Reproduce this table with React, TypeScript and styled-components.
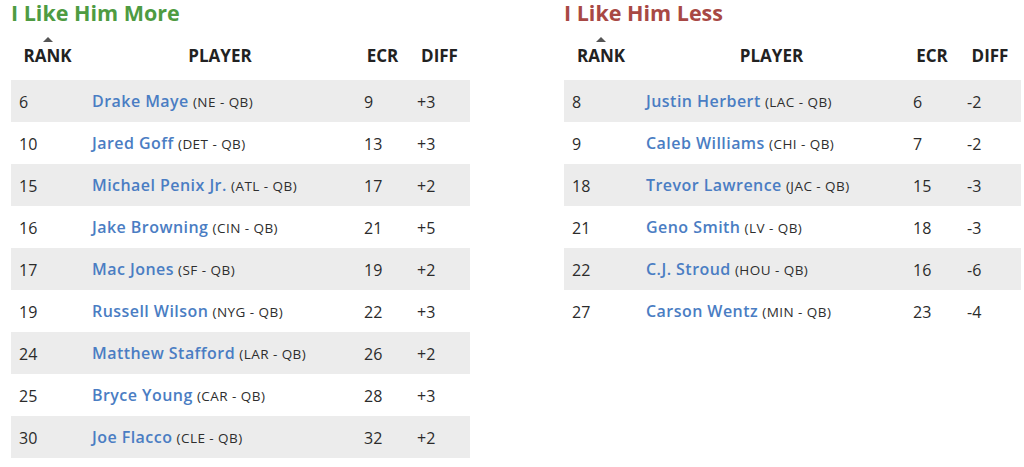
import React from "react";
import styled, { createGlobalStyle } from "styled-components";

const Global = createGlobalStyle`
  html, body { margin: 0; padding: 0; background: #ffffff; }
  body { font-family: "Open Sans", "Liberation Sans", sans-serif; color: #333333; }
`;

type Row = { rank: number; name: string; team: string; ecr: number; diff: string };

const more: Row[] = [
  { rank: 6, name: "Drake Maye", team: "NE - QB", ecr: 9, diff: "+3" },
  { rank: 10, name: "Jared Goff", team: "DET - QB", ecr: 13, diff: "+3" },
  { rank: 15, name: "Michael Penix Jr.", team: "ATL - QB", ecr: 17, diff: "+2" },
  { rank: 16, name: "Jake Browning", team: "CIN - QB", ecr: 21, diff: "+5" },
  { rank: 17, name: "Mac Jones", team: "SF - QB", ecr: 19, diff: "+2" },
  { rank: 19, name: "Russell Wilson", team: "NYG - QB", ecr: 22, diff: "+3" },
  { rank: 24, name: "Matthew Stafford", team: "LAR - QB", ecr: 26, diff: "+2" },
  { rank: 25, name: "Bryce Young", team: "CAR - QB", ecr: 28, diff: "+3" },
  { rank: 30, name: "Joe Flacco", team: "CLE - QB", ecr: 32, diff: "+2" },
];

const less: Row[] = [
  { rank: 8, name: "Justin Herbert", team: "LAC - QB", ecr: 6, diff: "-2" },
  { rank: 9, name: "Caleb Williams", team: "CHI - QB", ecr: 7, diff: "-2" },
  { rank: 18, name: "Trevor Lawrence", team: "JAC - QB", ecr: 15, diff: "-3" },
  { rank: 21, name: "Geno Smith", team: "LV - QB", ecr: 18, diff: "-3" },
  { rank: 22, name: "C.J. Stroud", team: "HOU - QB", ecr: 16, diff: "-6" },
  { rank: 27, name: "Carson Wentz", team: "MIN - QB", ecr: 23, diff: "-4" },
];

const Page = styled.div`
  display: flex;
  gap: 94px;
  padding-left: 11px;
  align-items: flex-start;
`;

const Panel = styled.section<{ $w: number }>`
  width: ${(p) => p.$w}px;
  display: flex;
  flex-direction: column;
`;

const Title = styled.h2<{ $color: string }>`
  margin: 0;
  font-size: 21.5px;
  line-height: 26px;
  font-weight: 700;
  color: ${(p) => p.$color};
`;

const Grid = styled.div<{ $cols: string }>`
  display: grid;
  grid-template-columns: ${(p) => p.$cols};
`;

const HeadRow = styled(Grid)`
  height: 54px;
  align-items: end;
`;

const HeadCell = styled.div`
  display: flex;
  flex-direction: column;
  align-items: center;
  font-size: 17px;
  line-height: 22px;
  font-weight: 700;
  color: #222222;
  padding-bottom: 13px;
`;

const SortArrow = styled.span`
  width: 0;
  height: 0;
  border-left: 5px solid transparent;
  border-right: 5px solid transparent;
  border-bottom: 5px solid #555555;
  margin-bottom: 3px;
`;

const BodyRow = styled(Grid)<{ $shade: boolean }>`
  height: 42px;
  align-items: center;
  background: ${(p) => (p.$shade ? "#ececec" : "#ffffff")};
`;

const Cell = styled.div`
  padding-left: 8px;
  padding-top: 1px;
  font-size: 16px;
  line-height: 41px;
  color: #2b2b2b;
  white-space: nowrap;
`;

const Name = styled.a`
  color: #4a7dc3;
  font-weight: 600;
  letter-spacing: 0.45px;
  text-decoration: none;
`;

const Team = styled.span`
  font-size: 13.5px;
  letter-spacing: 0.45px;
  color: #2e2e2e;
`;

function Table({ title, color, rows, cols, width }: { title: string; color: string; rows: Row[]; cols: string; width: number }) {
  return (
    <Panel $w={width}>
      <Title $color={color}>{title}</Title>
      <HeadRow $cols={cols}>
        <HeadCell>
          <SortArrow />
          RANK
        </HeadCell>
        <HeadCell>PLAYER</HeadCell>
        <HeadCell>ECR</HeadCell>
        <HeadCell>DIFF</HeadCell>
      </HeadRow>
      {rows.map((r, i) => (
        <BodyRow key={r.rank} $cols={cols} $shade={i % 2 === 0}>
          <Cell>{r.rank}</Cell>
          <Cell>
            <Name>{r.name}</Name> <Team>({r.team})</Team>
          </Cell>
          <Cell>{r.ecr}</Cell>
          <Cell>{r.diff}</Cell>
        </BodyRow>
      ))}
    </Panel>
  );
}

export default function App() {
  return (
    <>
      <Global />
      <Page>
        <Table title="I Like Him More" color="#4e9b42" rows={more} cols="73px 272px 53px 61px" width={459} />
        <Table title="I Like Him Less" color="#a84844" rows={less} cols="74px 267px 54px 62px" width={457} />
      </Page>
    </>
  );
}
